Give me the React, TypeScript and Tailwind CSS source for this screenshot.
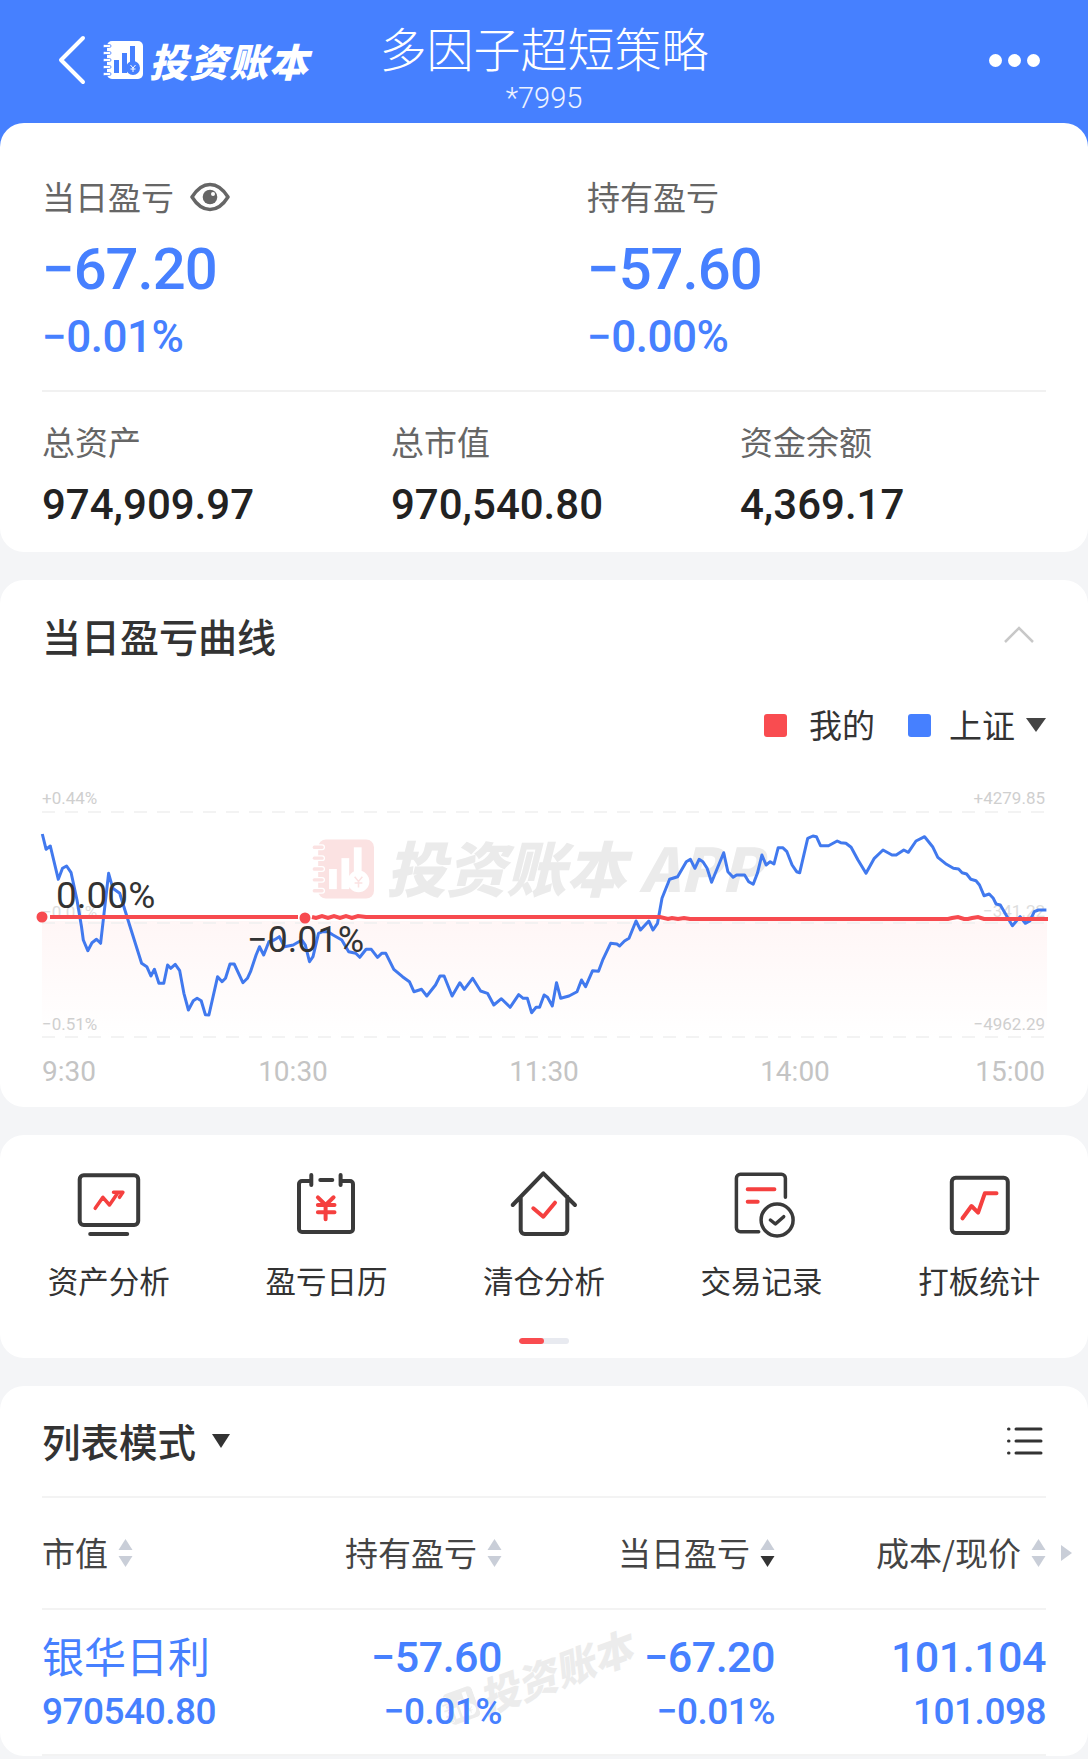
const cjk = "font-['Noto_Sans_CJK_SC','Noto_Sans',sans-serif]";
const num = "font-['Roboto','Noto_Sans_CJK_SC',sans-serif]";

// chart traces, read off the reference
const leftRaw = [122,222,133,268,145,258,168,358,180,325,192,318,205,338,222,420,235,500,240,540,253,572,265,548,278,538,290,550,313,340,325,385,345,400,375,500,408,610,423,620,435,648,445,628,458,670,472,670,483,615,492,625,505,613,518,632,530,700,543,750,557,722,568,715,580,722,592,764,602,765,627,650,640,665,650,655,663,612,675,612,700,668,713,655,722,635,738,585,748,560,760,585,775,545,790,540,805,530,820,560,845,555,870,540,880,555,892,605,902,590,918,520,930,515,945,515,960,525,985,540,1005,575,1025,580,1037,592,1055,568,1070,568,1088,592,1100,580,1112,580,1135,628,1160,650,1180,665,1193,695,1215,688,1230,708,1255,675,1268,648,1280,648,1303,708,1325,668,1338,688,1362,655,1385,693,1405,700,1423,735,1445,716,1470,742,1495,704,1508,715,1520,715,1532,758,1545,742,1555,742,1568,705];
const rightRaw = [10,712,24,738,36,668,48,715,72,708,95,695,108,660,120,680,140,632,157,634,170,598,192,550,210,552,218,558,232,543,245,535,265,483,278,510,302,483,314,510,327,490,340,415,362,358,385,350,410,305,422,298,435,325,447,298,458,305,470,325,483,367,518,278,530,335,545,352,555,345,578,345,590,365,603,373,615,340,628,285,640,315,652,305,663,312,675,263,688,263,700,275,715,315,728,335,737,338,760,235,775,228,785,230,797,257,820,257,845,243,855,248,870,250,885,262,905,300,928,340,952,295,977,270,1003,285,1015,285,1037,270,1050,277,1072,243,1097,230,1120,260,1135,292,1160,313,1180,325,1195,327,1205,338,1218,342,1230,358,1245,362,1255,375,1268,407,1283,402,1295,415,1303,432,1315,435,1350,497,1372,470,1387,490,1400,483,1413,455,1425,450,1448,450];

function toPoints(raw: number[], offset: number) {
  const out: string[] = [];
  for (let i = 0; i < raw.length; i += 2) {
    out.push(`${(offset + raw[i] / 2.882).toFixed(1)},${(760 + raw[i + 1] / 3).toFixed(1)}`);
  }
  return out.join(" ");
}
const bluePoints = toPoints(leftRaw, 0) + " " + toPoints(rightRaw, 544);

function LogoMark({ fg, bg, className }: { fg: string; bg: string; className?: string }) {
  return (
    <svg viewBox="0 0 40 40" className={className}>
      <rect x="4" y="1" width="36" height="38" rx="5" fill={fg} />
      {[6, 13, 20, 27, 34].map((y) => (
        <rect key={y} x="0" y={y - 1.5} width="8" height="3" rx="1.5" fill={fg} stroke={bg} strokeWidth="0.8" />
      ))}
      <rect x="11" y="20" width="5" height="13" fill={bg} />
      <rect x="19" y="13" width="5" height="20" fill={bg} />
      <rect x="27" y="6" width="5" height="16" fill={bg} />
      <circle cx="30" cy="28" r="7" fill={bg} />
      <path d="M27.5 25 30 28l2.500-3M30 28v4M27.500 29h5" stroke={fg} strokeWidth="1" fill="none" />
    </svg>
  );
}

function SortArrows({ active }: { active?: boolean }) {
  return (
    <svg width="15" height="28" viewBox="0 0 15 28" className="ml-[10px] shrink-0">
      <path d="M7.500 0 14.500 11H.5z" fill="#c9ced8" />
      <path d="M7.500 28 14.500 17H.5z" fill={active ? "#333333" : "#c9ced8"} />
    </svg>
  );
}

const darkStroke = "#3a3a3a";
const redStroke = "#f5403f";

const tools = [
  {
    label: "资产分析",
    icon: (
      <g fill="none" strokeWidth="4" strokeLinejoin="round" strokeLinecap="round">
        <rect x="6.700" y="5.300" width="58.500" height="49.700" rx="4" stroke={darkStroke} />
        <path d="M17.200 64h37" stroke={darkStroke} />
        <path d="M22.200 38.300 29.900 27.300 36.500 35 44.500 23.300M40.500 22.300H49.900L46.500 27.300" stroke={redStroke} strokeWidth="3.500" />
      </g>
    ),
  },
  {
    label: "盈亏日历",
    icon: (
      <g fill="none" strokeWidth="4" strokeLinejoin="round" strokeLinecap="round">
        <path d="M21 11H12a3 3 0 0 0-3 3v45a3 3 0 0 0 3 3h48a3 3 0 0 0 3-3V14a3 3 0 0 0-3-3h-9" stroke={darkStroke} />
        <path d="M21.300 5v10M50.600 5v10M30.300 10h12" stroke={darkStroke} />
        <path d="M27.900 27.300 35.600 35 43.600 27.300M27.900 35h16.600M27.900 42.300h16.600M35.600 35v14.300" stroke={redStroke} />
      </g>
    ),
  },
  {
    label: "清仓分析",
    icon: (
      <g fill="none" strokeWidth="4" strokeLinejoin="round" strokeLinecap="round">
        <path d="M4.700 35 35.300 3.300 67 35M12.700 26.700V60a4 4 0 0 0 4 4h38.600a4 4 0 0 0 4-4V26.700" stroke={darkStroke} />
        <path d="M25.300 38.300 35.300 46.700 47 32.700" stroke={redStroke} />
      </g>
    ),
  },
  {
    label: "交易记录",
    icon: (
      <g fill="none" strokeWidth="3.500" strokeLinejoin="round" strokeLinecap="round">
        <path d="M32.700 61.700H14.400a4 4 0 0 1-4-4V8.300a4 4 0 0 1 4-4h41a4 4 0 0 1 4 4v19" stroke={darkStroke} />
        <path d="M21.700 19.300H48.400M21.700 31.700h10" stroke={redStroke} strokeWidth="4" />
        <circle cx="51.100" cy="50" r="16" stroke={darkStroke} />
        <path d="M44.400 50 49.400 54 57.700 46.700" stroke={darkStroke} />
      </g>
    ),
  },
  {
    label: "打板统计",
    icon: (
      <g fill="none" strokeWidth="4" strokeLinejoin="round" strokeLinecap="round">
        <rect x="8.800" y="7.700" width="56" height="55.300" rx="4" stroke={darkStroke} />
        <path d="M19.500 48.300 28.500 36 35.100 42.700 41.800 23.300H53.500" stroke={redStroke} />
      </g>
    ),
  },
];

export default function App() {
  return (
    <div className={`${cjk} h-[1759px] w-[1088px] overflow-hidden bg-[#f4f5f7]`}>
      {/* top bar */}
      <div className="relative h-[147px] bg-[#4680ff] text-white">
        <div className="flex items-center pl-[58px] pt-[35px]">
          <svg width="28" height="50" viewBox="0 0 28 50" fill="none" stroke="white" strokeWidth="4" strokeLinecap="round" strokeLinejoin="round">
            <path d="M25 3 3 25l22 22" />
          </svg>
          <LogoMark fg="white" bg="#4680ff" className="ml-[17px] h-[40px] w-[40px]" />
          <span className="ml-[6px] text-[39px] leading-[50px] font-black italic tracking-[1px]">投资账本</span>
        </div>
        <div className="absolute inset-x-0 top-[14px] text-center">
          <div className="text-[47px] leading-[66px] font-light">多因子超短策略</div>
          <div className={`${num} text-[29px] leading-[36px] font-light text-white/90`}>*7995</div>
        </div>
        <div className="absolute top-[54px] right-[48px] flex gap-[6px]">
          <span className="h-[13px] w-[13px] rounded-full bg-white" />
          <span className="h-[13px] w-[13px] rounded-full bg-white" />
          <span className="h-[13px] w-[13px] rounded-full bg-white" />
        </div>
      </div>

      {/* account summary */}
      <div className="relative -mt-[24px] h-[429px] rounded-[24px] bg-white px-[42px] pt-[50px]">
        <div className="grid h-[219px] grid-cols-[545px_1fr] border-b-2 border-[#f1f1f1]">
          <div>
            <div className="flex h-[48px] items-center text-[33px] text-[#666666]">
              当日盈亏
              <svg width="40" height="30" viewBox="0 0 40 30" className="ml-[16px]" fill="none" stroke="#666666" strokeWidth="3.500">
                <path d="M2 15C7 7 13 2.500 20 2.500S33 7 38 15c-5 8-11 12.500-18 12.500S7 23 2 15Z" strokeLinejoin="round" />
                <circle cx="20" cy="15" r="7.300" fill="#666666" stroke="none" />
                <circle cx="23" cy="12" r="2" fill="white" stroke="none" />
              </svg>
            </div>
            <div className={`${num} mt-[18px] text-[58px] leading-[60px] font-medium tracking-[-1px] text-[#4680ff]`}>−67.20</div>
            <div className={`${num} mt-[14px] text-[44px] leading-[48px] font-medium tracking-[-0.5px] text-[#4680ff]`}>−0.01%</div>
          </div>
          <div>
            <div className="flex h-[48px] items-center text-[33px] text-[#666666]">持有盈亏</div>
            <div className={`${num} mt-[18px] text-[58px] leading-[60px] font-medium tracking-[-1px] text-[#4680ff]`}>−57.60</div>
            <div className={`${num} mt-[14px] text-[44px] leading-[48px] font-medium tracking-[-0.5px] text-[#4680ff]`}>−0.00%</div>
          </div>
        </div>
        <div className="mt-[26px] grid grid-cols-[349px_349px_1fr]">
          {[
            ["总资产", "974,909.97"],
            ["总市值", "970,540.80"],
            ["资金余额", "4,369.17"],
          ].map(([label, value]) => (
            <div key={label}>
              <div className="text-[33px] leading-[46px] text-[#666666]">{label}</div>
              <div className={`${num} mt-[17px] text-[42px] leading-[48px] font-medium text-[#222222]`}>{value}</div>
            </div>
          ))}
        </div>
      </div>

      {/* daily curve */}
      <div className="relative mt-[28px] h-[527px] rounded-[24px] bg-white">
        <div className="flex items-center justify-between px-[42px] pt-[28px]">
          <div className="text-[39px] leading-[54px] font-medium text-[#333333]">当日盈亏曲线</div>
          <svg width="32" height="18" viewBox="0 0 32 18" fill="none" stroke="#c8c8c8" strokeWidth="2.500" className="mr-[11px]">
            <path d="M2 16 16 2l14 14" />
          </svg>
        </div>
        <div className="mt-[40px] flex h-[46px] items-center justify-end pr-[42px] text-[33px] text-[#333333]">
          <span className="h-[23px] w-[23px] rounded-[3px] bg-[#f94c50]" />
          <span className="ml-[22px]">我的</span>
          <span className="ml-[33px] h-[23px] w-[23px] rounded-[3px] bg-[#4680ff]" />
          <span className="ml-[18px]">上证</span>
          <svg width="20" height="14" viewBox="0 0 20 14" className="ml-[11px]"><path d="M0 0h20L10 14z" fill="#444444" /></svg>
        </div>
        <svg viewBox="0 780 1088 327" width="1088" height="327" className="mt-[32px] block">
          <defs>
            <linearGradient id="pnlFill" x1="0" y1="0" x2="0" y2="1">
              <stop offset="0" stopColor="#fff6f6" />
              <stop offset="1" stopColor="#ffffff" />
            </linearGradient>
          </defs>
          <rect x="42" y="921" width="1005" height="116" fill="url(#pnlFill)" />
          {[812, 923, 1037].map((y) => (
            <line key={y} x1="42" x2="1046" y1={y} y2={y} stroke="#efefef" strokeWidth="1.500" strokeDasharray="13 10" />
          ))}
          <g className="font-['Noto_Sans_CJK_SC',sans-serif] italic" fontWeight="900">
            <text x="386" y="892" fontSize="60" fill="#ebebeb">投资账本 APP</text>
          </g>
          <svg x="312" y="838" width="62" height="62" viewBox="0 0 40 40">
            <LogoMark fg="#fbe2e2" bg="#ffffff" />
          </svg>
          <g className="font-['Roboto',sans-serif]" fontSize="17" fill="#cfcfcf">
            <text x="42" y="804">+0.44%</text>
            <text x="42" y="1030">−0.51%</text>
            <text x="42" y="918" fill="#dddddd">−0.01%</text>
            <text x="1045" y="804" textAnchor="end">+4279.85</text>
            <text x="1045" y="1030" textAnchor="end">−4962.29</text>
            <text x="1045" y="917" textAnchor="end" fill="#dddddd">−341.22</text>
          </g>
          <g className="font-['Roboto',sans-serif]" fontSize="28" fill="#c4c4c4">
            <text x="42" y="1081">9:30</text>
            <text x="293" y="1081" textAnchor="middle">10:30</text>
            <text x="544" y="1081" textAnchor="middle">11:30</text>
            <text x="795" y="1081" textAnchor="middle">14:00</text>
            <text x="1045" y="1081" textAnchor="end">15:00</text>
          </g>
          <polyline points={bluePoints} fill="none" stroke="#4179ee" strokeWidth="3" strokeLinejoin="round" />
          <path d="M50 917H298M312 917 316 918 322 916 328 918 334 916 340 918 346 916 352 918 358 916 366 917H660L668 919 672 918 678 919 684 918 690 919H948L952 918 958 917 964 919H968L972 918 978 917 984 919H1048" fill="none" stroke="#f74a4f" strokeWidth="4" />
          <circle cx="42" cy="917" r="5.500" fill="#f74a4f" />
          <circle cx="305" cy="918" r="5.500" fill="#f74a4f" />
          <g className="font-['Roboto',sans-serif]" fill="#333333">
            <text x="56" y="908" fontSize="37">0.00%</text>
            <text x="247" y="952" fontSize="36">−0.01%</text>
          </g>
        </svg>
      </div>

      {/* shortcuts */}
      <div className="mt-[28px] h-[223px] rounded-[24px] bg-white pt-[35px]">
        <div className="grid grid-cols-5">
          {tools.map((tool) => (
            <div key={tool.label} className="flex flex-col items-center">
              <svg width="72" height="72" viewBox="0 0 72 72">{tool.icon}</svg>
              <div className="mt-[16px] text-[30.500px] leading-[44px] text-[#333333]">{tool.label}</div>
            </div>
          ))}
        </div>
        <div className="mx-auto mt-[36px] flex h-[6px] w-[50px] overflow-hidden rounded-full bg-[#e8eaf0]">
          <span className="h-full w-[25px] rounded-full bg-[#f94c50]" />
        </div>
      </div>

      {/* holdings list */}
      <div className="relative mt-[28px] rounded-[24px] bg-white px-[42px]">
        <div className="flex h-[112px] items-center justify-between border-b-2 border-[#f3f3f3]">
          <div className="flex items-center text-[38.500px] font-medium text-[#333333]">
            列表模式
            <svg width="18" height="14" viewBox="0 0 18 14" className="ml-[16px]"><path d="M0 0h18L9 14z" fill="#333333" /></svg>
          </div>
          <svg width="36" height="30" viewBox="0 0 36 30" stroke="#333333" strokeWidth="3" strokeLinecap="round" className="mr-[3px]">
            <path d="M9 3h25M9 15h25M9 27h25M1.500 3h.5M1.500 15h.5M1.500 27h.5" />
          </svg>
        </div>
        <div className="relative grid h-[112px] grid-cols-[190px_270px_273px_271px] items-center border-b-2 border-[#f3f3f3] text-[33px] text-[#444444]">
          <div className="flex items-center">市值<SortArrows /></div>
          <div className="flex items-center justify-end">持有盈亏<SortArrows /></div>
          <div className="flex items-center justify-end">当日盈亏<SortArrows active /></div>
          <div className="flex items-center justify-end">成本/现价<SortArrows /></div>
          <svg width="11" height="16" viewBox="0 0 11 16" className="absolute top-[47px] left-[1019px]"><path d="M0 0 11 8 0 16z" fill="#c9ced8" /></svg>
        </div>
        <div className="relative grid h-[146px] grid-cols-[190px_270px_273px_271px] content-start border-b-2 border-[#f3f3f3] pt-[20px] text-[#4680ff]">
          <div className="absolute top-[38px] left-[396px] flex -rotate-[20deg] items-center text-[40px] font-black text-[#ececec] italic">
            <LogoMark fg="#ececec" bg="#ffffff" className="mr-[4px] h-[34px] w-[34px]" />
            投资账本
          </div>
          <div className="relative self-start text-[42px] leading-[49px]">银华日利</div>
          <div className={`${num} relative text-right text-[43px] leading-[55px] font-medium tracking-[-0.5px]`}>−57.60</div>
          <div className={`${num} relative text-right text-[43px] leading-[55px] font-medium tracking-[-0.5px]`}>−67.20</div>
          <div className={`${num} relative text-right text-[43px] leading-[55px] font-medium tracking-[-0.5px]`}>101.104</div>
          <div className={`${num} relative mt-[2px] text-[37px] leading-[50px] font-medium tracking-[-0.5px]`}>970540.80</div>
          <div className={`${num} relative mt-[2px] text-right text-[37px] leading-[50px] font-medium tracking-[-0.5px]`}>−0.01%</div>
          <div className={`${num} relative mt-[2px] text-right text-[37px] leading-[50px] font-medium tracking-[-0.5px]`}>−0.01%</div>
          <div className={`${num} relative mt-[2px] text-right text-[37px] leading-[50px] font-medium tracking-[-0.5px]`}>101.098</div>
        </div>
      </div>
    </div>
  );
}
